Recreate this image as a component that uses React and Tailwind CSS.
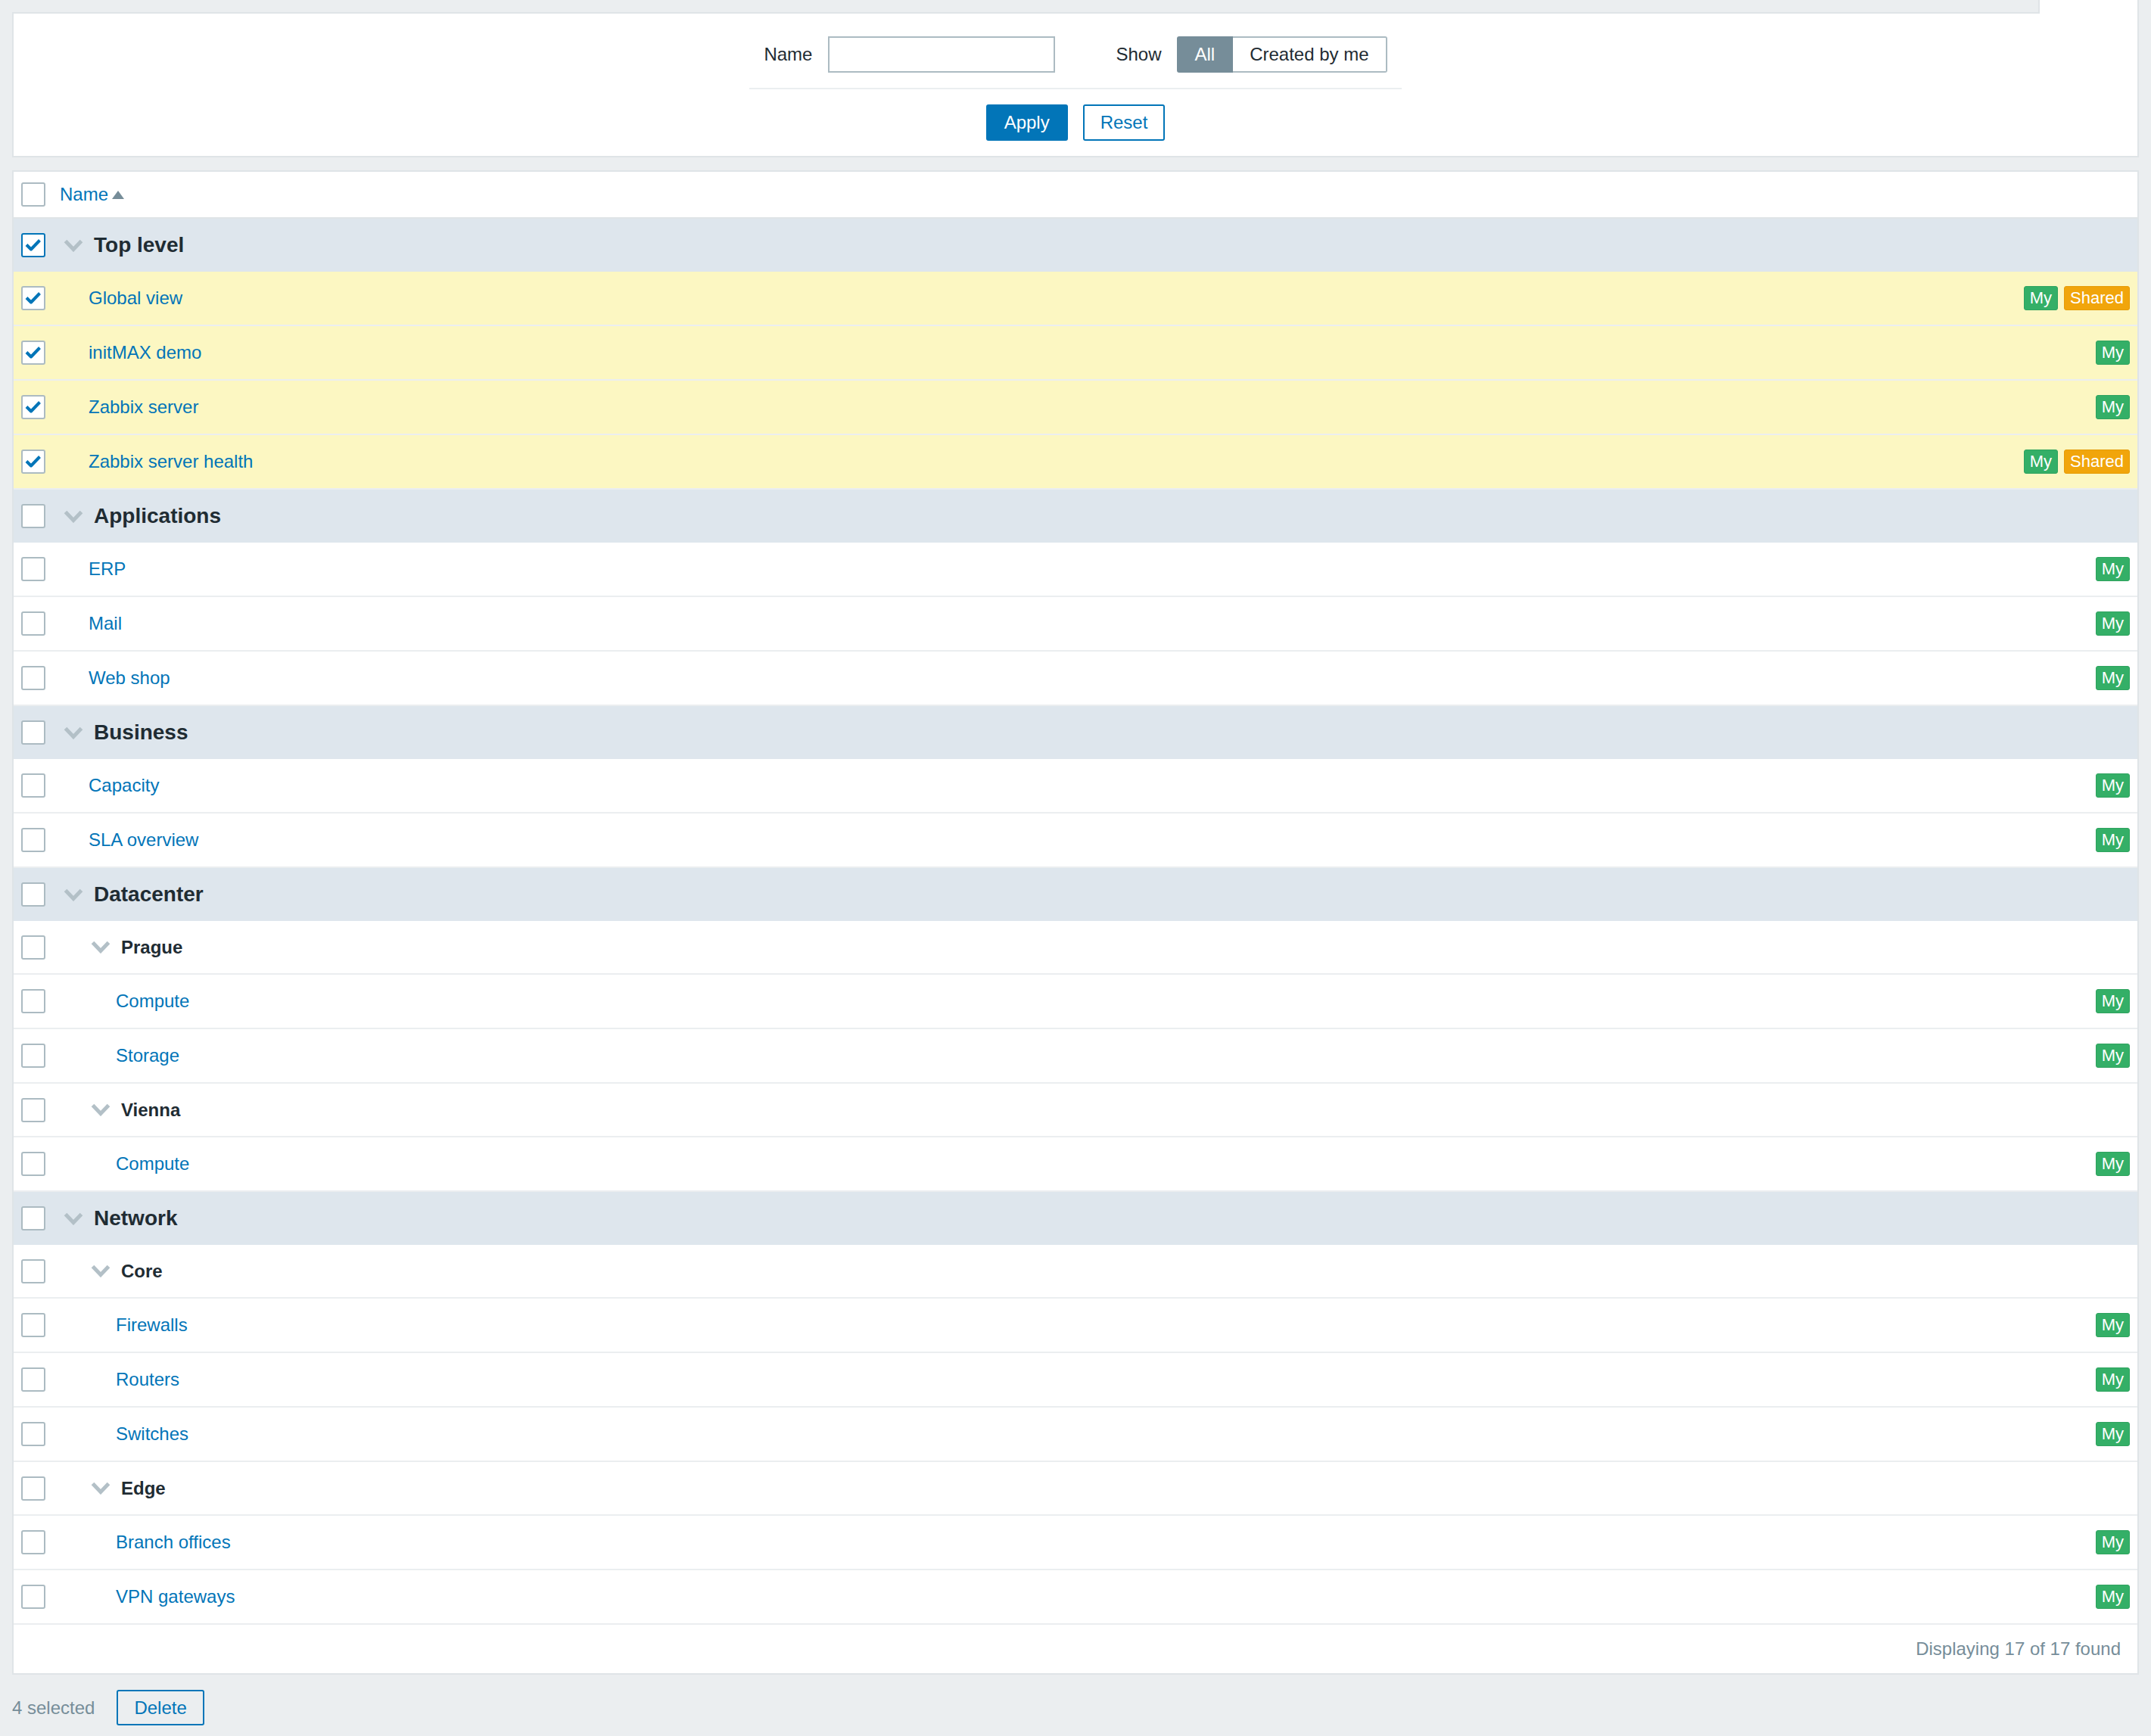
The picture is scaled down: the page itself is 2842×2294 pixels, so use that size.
import React from "react";

const FONT = { fontFamily: '"Liberation Sans", Arial, sans-serif' };

function Check() {
  return (
    <svg width="28" height="28" viewBox="0 0 28 28" fill="none">
      <polyline points="5,13.5 11,19.5 22.5,7.5" stroke="#0275b8" strokeWidth="4" strokeLinejoin="round" />
    </svg>
  );
}

function Checkbox({ checked, blue }) {
  return (
    <div
      className={
        "w-[32px] h-[32px] shrink-0 rounded-[3px] border-2 bg-white flex items-center justify-center " +
        (blue ? "border-[#0275b8]" : "border-[#acbbc2]")
      }
    >
      {checked ? <Check /> : null}
    </div>
  );
}

function Chevron() {
  return (
    <svg width="26" height="17" viewBox="0 0 26 17" fill="none" className="shrink-0">
      <polyline points="2.5,2.5 13,13.5 23.5,2.5" stroke="#b3c0c7" strokeWidth="5" />
    </svg>
  );
}

function Badge({ kind }) {
  if (kind === "My")
    return (
      <span className="h-[32px] flex items-center px-[7px] rounded-[3px] bg-[#34af67] border border-[#2fa35f] text-white text-[22px] leading-none">
        My
      </span>
    );
  return (
    <span className="h-[32px] flex items-center px-[7px] rounded-[3px] bg-[#f1a50b] border border-[#e59c08] text-white text-[22px] leading-none">
      Shared
    </span>
  );
}

const rows = [
  { t: "g", name: "Top level", checked: true },
  { t: "i", l: 1, name: "Global view", badges: ["My", "Shared"], sel: true },
  { t: "i", l: 1, name: "initMAX demo", badges: ["My"], sel: true },
  { t: "i", l: 1, name: "Zabbix server", badges: ["My"], sel: true },
  { t: "i", l: 1, name: "Zabbix server health", badges: ["My", "Shared"], sel: true },
  { t: "g", name: "Applications" },
  { t: "i", l: 1, name: "ERP", badges: ["My"] },
  { t: "i", l: 1, name: "Mail", badges: ["My"] },
  { t: "i", l: 1, name: "Web shop", badges: ["My"] },
  { t: "g", name: "Business" },
  { t: "i", l: 1, name: "Capacity", badges: ["My"] },
  { t: "i", l: 1, name: "SLA overview", badges: ["My"] },
  { t: "g", name: "Datacenter" },
  { t: "s", name: "Prague" },
  { t: "i", l: 2, name: "Compute", badges: ["My"] },
  { t: "i", l: 2, name: "Storage", badges: ["My"] },
  { t: "s", name: "Vienna" },
  { t: "i", l: 2, name: "Compute", badges: ["My"] },
  { t: "g", name: "Network" },
  { t: "s", name: "Core" },
  { t: "i", l: 2, name: "Firewalls", badges: ["My"] },
  { t: "i", l: 2, name: "Routers", badges: ["My"] },
  { t: "i", l: 2, name: "Switches", badges: ["My"] },
  { t: "s", name: "Edge" },
  { t: "i", l: 2, name: "Branch offices", badges: ["My"] },
  { t: "i", l: 2, name: "VPN gateways", badges: ["My"] },
];

function Row({ r }) {
  if (r.t === "g") {
    return (
      <div className="h-[70px] flex items-center pl-[10px] bg-[#dee6ed]">
        <Checkbox checked={r.checked} blue={r.checked} />
        <span className="ml-[24px]">
          <Chevron />
        </span>
        <span className="ml-[14px] text-[28px] font-bold text-[#1f2c33] leading-none">{r.name}</span>
      </div>
    );
  }
  if (r.t === "s") {
    return (
      <div className="h-[71px] flex items-center pl-[10px] bg-white border-b-2 border-[#ebeef0]">
        <Checkbox />
        <span className="ml-[60px]">
          <Chevron />
        </span>
        <span className="ml-[14px] text-[24px] font-bold text-[#1f2c33] leading-none">{r.name}</span>
      </div>
    );
  }
  return (
    <div
      className={
        "h-[72px] flex items-center pl-[10px] pr-[10px] border-b-2 border-[#ebeef0] " +
        (r.sel ? "bg-[#fcf7c2]" : "bg-white")
      }
    >
      <Checkbox checked={r.sel} />
      <a className={"text-[24px] text-[#0275b8] leading-none " + (r.l === 1 ? "ml-[57px]" : "ml-[93px]")}>
        {r.name}
      </a>
      <div className="ml-auto flex items-center gap-[8px]">
        {r.badges.map((b, i) => (
          <Badge key={i} kind={b} />
        ))}
      </div>
    </div>
  );
}

export default function App() {
  return (
    <div className="min-h-screen w-full bg-[#ebeef0] text-[#1f2c33]" style={FONT}>
      {/* top strip with tab */}
      <div className="flex h-[16px] justify-end pr-[16px]">
        <div className="w-[133px] h-[18px] bg-white border-x-2 border-[#dfe4e7] relative z-10"></div>
      </div>

      {/* filter panel */}
      <div className="mx-[16px] bg-white border-2 border-[#dfe4e7] pt-[30px] pb-[20px]">
        <div className="flex justify-center items-center h-[48px]">
          <span className="text-[24px] leading-none">Name</span>
          <div className="ml-[21px] w-[300px] h-[48px] border-2 border-[#acbbc2] bg-white"></div>
          <span className="ml-[80px] text-[24px] leading-none">Show</span>
          <div className="ml-[20px] flex h-[48px]">
            <div className="h-full flex items-center px-[22px] bg-[#768d99] border-2 border-[#768d99] rounded-l-[3px] text-white text-[24px]">
              All
            </div>
            <div className="h-full flex items-center px-[22px] bg-white border-2 border-l-0 border-[#acbbc2] rounded-r-[3px] text-[24px] text-[#1f2c33]">
              Created by me
            </div>
          </div>
        </div>
        <div className="w-[862px] mx-auto mt-[20px] border-t-2 border-[#ebeef0]"></div>
        <div className="flex justify-center mt-[20px] gap-[20px]">
          <button className="h-[48px] px-[22px] bg-[#0275b8] border-2 border-[#0275b8] rounded-[3px] text-white text-[24px]">
            Apply
          </button>
          <button className="h-[48px] px-[21px] bg-white border-2 border-[#0275b8] rounded-[3px] text-[#0275b8] text-[24px]">
            Reset
          </button>
        </div>
      </div>

      {/* table panel */}
      <div className="mx-[16px] mt-[17px] bg-white border-2 border-[#dfe4e7]">
        <div className="h-[62px] flex items-center pl-[10px] border-b-2 border-[#dfe4e7]">
          <Checkbox />
          <a className="ml-[19px] text-[24px] text-[#0275b8] leading-none">Name</a>
          <svg width="16" height="11" viewBox="0 0 16 11" className="ml-[5px]">
            <polygon points="8,0 16,11 0,11" fill="#768d99" />
          </svg>
        </div>
        {rows.map((r, i) => (
          <Row key={i} r={r} />
        ))}
        <div className="h-[64px] flex items-center justify-end pr-[22px] text-[24px] text-[#768d99]">
          Displaying 17 of 17 found
        </div>
      </div>

      {/* bottom action bar */}
      <div className="flex items-center mt-[20px] pl-[16px] pb-[17px]">
        <span className="text-[24px] text-[#768d99] leading-none">4 selected</span>
        <button className="ml-[29px] h-[47px] px-[21px] border-2 border-[#0275b8] rounded-[3px] text-[#0275b8] text-[24px] bg-transparent">
          Delete
        </button>
      </div>
    </div>
  );
}
